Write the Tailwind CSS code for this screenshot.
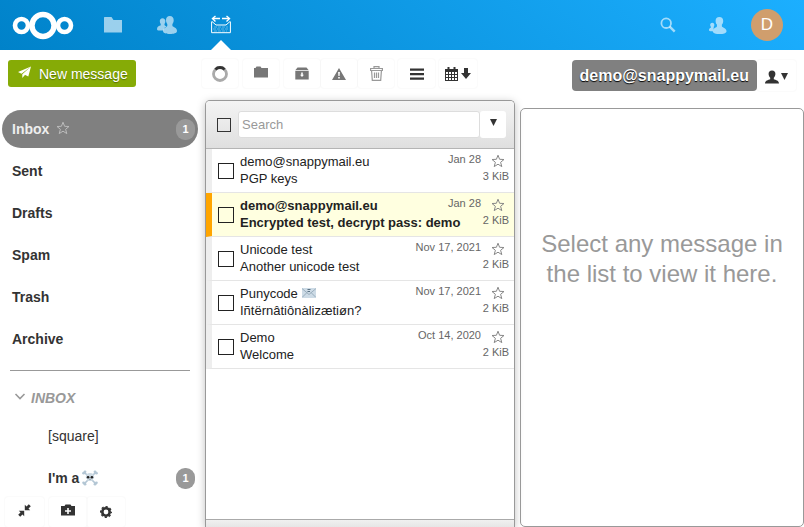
<!DOCTYPE html>
<html lang="en">
<head>
<meta charset="utf-8">
<meta name="viewport" content="width=device-width, initial-scale=1">
<title>SnappyMail</title>
<script src="https://cdn.jsdelivr.net/npm/@tailwindcss/browser@4"></script>
</head>
<body class="flex h-screen flex-col overflow-hidden bg-white font-['Liberation_Sans',Arial,sans-serif] text-[13px] text-[#222]">

<svg class="hidden" aria-hidden="true">
  <symbol id="star" viewBox="0 0 14 14"><path d="M7 1.2 8.6 5.3 13 5.5 9.6 8.3 10.8 12.6 7 10.2 3.2 12.6 4.4 8.3 1 5.5 5.4 5.3Z" fill="none" stroke="currentColor" stroke-width="1"/></symbol>
  <symbol id="people" viewBox="0 0 20 20"><path d="M5.5 3.2c1.9 0 2.9 1.3 2.9 3.1 0 1-.4 1.9-.9 2.6v1.2c0 .5 1.3.9 2 1.3-1.900.7-2.700 1.900-2.900 4.100H2.300C.8 15.500 0 15 0 14.200c0-2 1.300-3.200 3.200-3.700.4-.1.500-.3.500-.6V8.900c-.6-.7-.9-1.600-.9-2.600 0-1.800.9-3.100 2.700-3.100Z"/><path d="M12.800 1c2.600 0 3.900 1.700 3.900 4.200 0 1.500-.5 2.900-1.300 3.800v1.800c0 1.200 4.600 1.700 4.600 5.200 0 2.300-3.500 3-7 3s-7-.7-7-3c0-3.300 4.300-3.800 4.300-5.200V9C9.500 8.100 9 6.700 9 5.200 9 2.700 10.200 1 12.800 1Z"/></symbol>
</svg>

<header class="flex h-[50px] shrink-0 items-center bg-[linear-gradient(40deg,#0082c9_0%,#1cafff_100%)] pr-[21px] pl-3 text-white">
  <a href="#" aria-label="Home" class="mr-[23px]">
    <svg class="h-[30px] w-[62px]" viewBox="0 0 62 30" fill="none" stroke="#fff"><circle cx="31" cy="15.500" r="11" stroke-width="5.400"/><circle cx="9.500" cy="15.500" r="6.500" stroke-width="4.600"/><circle cx="52.500" cy="15.500" r="6.500" stroke-width="4.600"/></svg>
  </a>
  <nav class="flex h-full flex-1 items-center">
    <a href="#" aria-label="Files" class="flex w-8 justify-center text-white/60"><svg class="size-5" viewBox="0 0 20 20" fill="currentColor"><path d="M1.500 2h7l2 3H19v12.500H1V2.500Z"/></svg></a>
    <a href="#" aria-label="Contacts" class="ml-[22px] flex w-8 justify-center text-white/60"><svg class="size-5" fill="currentColor"><use href="#people"/></svg></a>
    <a href="#" aria-label="SnappyMail" class="relative ml-[22px] flex h-full w-8 items-center justify-center">
      <svg class="size-5" viewBox="0 0 20 20" fill="none" stroke="#fff"><path d="M.6 6.500v11.200h18.800V6.500M1 6.500 5 10h10l4-3.500" stroke-width="1"/><path d="M9 3.500H2M11 3.500H18" stroke-width="1.500"/><path d="M4.500 1 1.500 3.500l3 3M15.500 1l3 2.500-3 3" stroke-width="1.400"/><path d="M3 12h14M2 14h16M3 16h13" stroke-opacity=".35" stroke-dasharray="3 1"/></svg>
      <svg class="absolute bottom-0 left-[6px] h-[10px] w-5" viewBox="0 0 20 10" fill="#fff"><path d="M0 10 10 0 20 10Z"/></svg>
    </a>
  </nav>
  <button aria-label="Search" class="flex w-8 justify-center text-white/60"><svg class="size-4" viewBox="0 0 16 16" fill="none" stroke="currentColor"><circle cx="6.200" cy="6.200" r="4.800" stroke-width="1.800"/><path d="m9.700 9.700 5 5" stroke-width="2.400"/></svg></button>
  <button aria-label="Contacts menu" class="ml-[17px] flex w-8 justify-center text-white/60"><svg class="size-[19px]" viewBox="0 0 20 20" fill="currentColor"><path d="M4.500 7c1.500 0 2.200 1 2.200 2.400 0 .8-.3 1.500-.7 2v1.200L5 16H2.500c-1 0-1.500-.5-1.500-1.200 0-1.500 1-2.200 2-2.500v-.900c-.4-.5-.7-1.200-.7-2C2.300 8 3 7 4.500 7Z"/><path d="M12 1c2.600 0 4 1.700 4 4.200 0 1.500-.5 2.900-1.400 3.800v1.800c0 1.200 4.900 1.700 4.900 5.200 0 2.300-3.500 3-7.200 3s-7.300-.7-7.300-3c0-3.300 4.400-3.800 4.400-5.200V9C8.500 8.100 8 6.700 8 5.200 8 2.700 9.300 1 12 1Z"/></svg></button>
  <button aria-label="Account" class="ml-[18px] flex size-8 items-center justify-center rounded-full bg-[#d09e6d] text-[17px] text-white">D</button>
</header>

<main class="flex min-h-0 flex-1">
  <aside class="flex w-[205px] shrink-0 flex-col text-[14px] text-[#333]">
    <div class="h-[60px] shrink-0 pt-[10px] pl-2">
      <button class="flex h-[27px] items-center rounded-[3px] bg-[#86ab06] px-2 pt-px text-white [text-shadow:0_1px_1px_rgba(0,0,0,.35)]">
        <svg class="mr-[7px] mb-1 h-[13px] w-4" viewBox="0 0 16 13" fill="#fff"><path d="M15 .5 2 6l3.500 1.800ZM15 .5 6.300 8.200V12l2.200-2.400ZM15 .5 8.300 8.400l4 2.200Z"/></svg>
        New message
      </button>
    </div>
    <nav class="min-h-0 flex-1 overflow-hidden pl-[2px]">
      <ul class="flex flex-col gap-1 font-bold">
        <li><a href="#" class="mr-[7px] flex h-[38px] items-center rounded-full bg-[#808080] pr-[3px] pl-[10px] text-[#eee]">Inbox<svg class="mb-[3px] ml-[7px] size-[14px] text-[#bbb]"><use href="#star"/></svg><span class="ml-auto flex h-[21px] w-[19px] items-center justify-center rounded-[9px] bg-[#999] text-[11px] text-white">1</span></a></li>
        <li><a href="#" class="flex h-[38px] items-center pl-[10px]">Sent</a></li>
        <li><a href="#" class="flex h-[38px] items-center pl-[10px]">Drafts</a></li>
        <li><a href="#" class="flex h-[38px] items-center pl-[10px]">Spam</a></li>
        <li><a href="#" class="flex h-[38px] items-center pl-[10px]">Trash</a></li>
        <li><a href="#" class="flex h-[38px] items-center pl-[10px]">Archive</a></li>
      </ul>
      <hr class="mt-3 mr-[15px] mb-2 ml-2 border-[#999]">
      <ul>
        <li>
          <button class="flex h-[38px] items-center pl-3 font-bold text-[#999] italic"><svg class="mr-[5px] mb-1 h-[7px] w-3" viewBox="0 0 12 7" fill="none" stroke="currentColor" stroke-width="1.600"><path d="m1.500 1 4.500 4.500L10.500 1"/></svg>INBOX</button>
          <ul class="flex flex-col gap-1">
            <li><a href="#" class="flex h-[38px] items-center pl-[46px]">[square]</a></li>
            <li><a href="#" class="mr-[7px] flex h-[38px] items-center pr-[3px] pl-[46px] font-bold">I'm a
              <svg role="img" aria-label="skull and crossbones" class="ml-[3px] size-4" viewBox="0 0 16 16"><g stroke="#b3c6d4" stroke-width="1.700" stroke-linecap="round"><path d="M2.500 2.500 13.500 13.500M13.500 2.500 2.500 13.500"/></g><g fill="#b3c6d4"><circle cx="3" cy="1.800" r="1.400"/><circle cx="1.600" cy="3.200" r="1.400"/><circle cx="13" cy="1.800" r="1.400"/><circle cx="14.400" cy="3.200" r="1.400"/><circle cx="3" cy="14.200" r="1.400"/><circle cx="1.600" cy="12.800" r="1.400"/><circle cx="13" cy="14.200" r="1.400"/><circle cx="14.400" cy="12.800" r="1.400"/></g><path d="M8 3c2.700 0 4.200 1.600 4.200 3.700 0 1.400-.6 2.300-1.600 2.800v1.500H5.400V9.500c-1-.5-1.600-1.400-1.600-2.800C3.800 4.600 5.300 3 8 3Z" fill="#ccd9e2"/><circle cx="6.100" cy="7.200" r="1.300" fill="#222"/><circle cx="9.900" cy="7.200" r="1.300" fill="#222"/><path d="m8 8.500.7 1.100H7.300Z" fill="#444"/></svg>
              <span class="ml-auto flex h-[21px] w-[19px] items-center justify-center rounded-[9px] bg-[#999] text-[11px] text-white">1</span></a></li>
          </ul>
        </li>
      </ul>
    </nav>
    <footer class="flex h-[30px] shrink-0 items-center pl-[5px] text-[#333]">
      <button aria-label="Collapse" class="flex h-full w-[39px] items-center justify-center rounded-[3px] shadow-[0_0_2px_rgba(0,0,0,.07)]"><svg class="mb-1 size-[13px]" viewBox="0 0 13 13" fill="currentColor"><path d="M6.800 6.200V.8l1.700 1.700L10.800.2 12.800 2.200 10.500 4.500l1.700 1.700ZM6.200 6.800v5.400l-1.700-1.700L2.200 12.800.2 10.800 2.500 8.500.8 6.800Z"/></svg></button>
      <button aria-label="New folder" class="ml-[5px] flex h-full w-[38px] items-center justify-center rounded-[3px] shadow-[0_0_2px_rgba(0,0,0,.07)]"><svg class="mb-1 h-3 w-[14px]" viewBox="0 0 14 12" fill="currentColor"><path fill-rule="evenodd" d="M0 2h3.500L4.500.5h5l1 1.500H14v9.500H0ZM6.200 4v2.200H4v1.600h2.200V10h1.600V7.800H10V6.200H7.800V4Z"/></svg></button>
      <button aria-label="Settings" class="flex h-full w-[38px] items-center justify-center rounded-[3px] shadow-[0_0_2px_rgba(0,0,0,.07)]"><svg class="size-3" viewBox="0 0 12 12" fill="none" stroke="currentColor"><circle cx="6" cy="6" r="3.700" stroke-width="2.600"/><circle cx="6" cy="6" r="5.300" stroke-width="1.400" stroke-dasharray="2.200 1.960" stroke-dashoffset="1.100"/></svg></button>
    </footer>
  </aside>

  <section class="flex w-[310px] shrink-0 flex-col">
    <div class="flex h-[50px] shrink-0 items-start pt-[9px] text-[#333]">
      <button aria-label="Reload" class="-ml-[3px] flex h-[29px] w-[36px] items-center justify-center rounded-[3px] shadow-[0_0_2px_rgba(0,0,0,.07)]"><svg class="size-4" viewBox="0 0 16 16" fill="none" stroke-width="2.800"><circle cx="8" cy="8" r="6.500" stroke="#aaa"/><path d="M3.400 3.400A6.500 6.500 0 0 1 12.600 3.400" stroke="#333"/></svg></button>
      <button aria-label="Move to folder" class="ml-[5px] flex h-[29px] w-[36px] items-center justify-center rounded-[3px] text-[#777] shadow-[0_0_2px_rgba(0,0,0,.07)]"><svg class="mb-[3px] h-3 w-[14px]" viewBox="0 0 14 12" fill="currentColor"><path d="M0 2h1.500L2.500.5h4L7.500 2H14v9.500H0Z"/></svg></button>
      <button aria-label="Archive" class="ml-[5px] flex h-[29px] w-[36px] items-center justify-center rounded-[3px] text-[#777] shadow-[0_0_2px_rgba(0,0,0,.07)]"><svg class="h-[13px] w-[14px]" viewBox="0 0 14 13" fill="currentColor"><path d="M2.500.5h9L13.500 3H.5Z"/><path fill-rule="evenodd" d="M.3 3.800h13.400v8.700H.3ZM6.200 5.500v2.200H5L7 10l2-2.300H7.800V5.500Z"/></svg></button>
      <button aria-label="Spam" class="ml-px flex h-[29px] w-[36px] items-center justify-center rounded-[3px] text-[#777] shadow-[0_0_2px_rgba(0,0,0,.07)]"><svg class="h-3 w-[14px]" viewBox="0 0 14 12" fill="currentColor"><path fill-rule="evenodd" d="M7 0 14 12H0ZM6.100 4l.3 4h1.200l.3-4Zm.1 5v1.500h1.600V9Z"/></svg></button>
      <button aria-label="Delete" class="ml-px flex h-[29px] w-[36px] items-center justify-center rounded-[3px] text-[#999] shadow-[0_0_2px_rgba(0,0,0,.07)]"><svg class="h-[15px] w-[13px]" viewBox="0 0 13 15" fill="none" stroke="currentColor"><path d="M4 2.500V.7h5v1.800M.6 4.500v-2h11.800v2ZM1.600 4.800 2.300 14.300h8.400l.7-9.500" stroke-width="1.200"/><path d="M4.500 6.500V12M6.500 6.500V12M8.500 6.500V12" stroke-width="1.200"/></svg></button>
      <button aria-label="Menu" class="ml-1 flex h-[29px] w-[37px] items-center justify-center rounded-[3px] shadow-[0_0_2px_rgba(0,0,0,.07)]"><svg class="h-3 w-[14px]" viewBox="0 0 14 12" fill="currentColor"><path d="M0 .5h14v2.300H0ZM0 5h14v2.300H0ZM0 9.500h14v2.300H0Z"/></svg></button>
      <button aria-label="Sort by date" class="ml-1 flex h-[29px] w-[38px] items-center justify-center gap-[3px] rounded-[3px] shadow-[0_0_2px_rgba(0,0,0,.07)]"><svg class="h-[14px] w-[13px]" viewBox="0 0 13 14" fill="currentColor"><path fill-rule="evenodd" d="M0 2h13v12H0ZM1 5v2h2V5Zm3 0v2h2V5Zm3 0v2h2V5Zm3 0v2h2V5ZM1 8v2h2V8Zm3 0v2h2V8Zm3 0v2h2V8Zm3 0v2h2V8ZM1 11v2h2v-2Zm3 0v2h2v-2Zm3 0v2h2v-2Zm3 0v2h2v-2Z"/><path d="M2.500 0h2v3h-2ZM8.500 0h2v3h-2Z"/></svg><svg class="h-[11px] w-[10px]" viewBox="0 0 10 11" fill="currentColor"><path d="M3 0h4v5h3L5 11 0 5h3Z"/></svg></button>
    </div>

    <div class="flex min-h-0 flex-1 flex-col overflow-hidden rounded-t-[5px] border border-b-0 border-[#999] bg-white shadow-[0_2px_8px_rgba(0,0,0,.25)]">
      <div class="flex h-[48px] shrink-0 items-center border-b border-[#b4b4b4] bg-linear-to-b from-[#f4f4f4] to-[#dfdfdf] pr-2 pl-[11px]">
        <input type="checkbox" aria-label="Select all" class="size-[14px] appearance-none border border-[#333]">
        <input type="search" aria-label="Search" placeholder="Search" class="ml-[7px] h-[27px] min-w-0 flex-1 rounded-[3px] border border-[#ddd] bg-white px-[3px] placeholder:text-[#999]">
        <button aria-label="Search options" class="flex h-[27px] w-[26px] items-center justify-center rounded-[3px] bg-white"><svg class="mb-1 size-[7px]" viewBox="0 0 7 7" fill="#333"><path d="M0 0h7L3.500 7Z"/></svg></button>
      </div>

      <ul class="min-h-0 flex-1 overflow-hidden leading-[17px]">
        <li class="flex h-[44px] border-b border-l-6 border-b-[#e5e5e5] border-l-[#eee] pt-1 pr-[5px] pl-[6px]">
          <input type="checkbox" aria-label="Select PGP keys" class="mt-[10px] size-4 shrink-0 appearance-none border border-[#222]">
          <a href="#" class="ml-[6px] min-w-0 flex-1"><div>demo@snappymail.eu</div><div>PGP keys</div></a>
          <div class="text-[11px] text-[#666]"><div class="flex h-[15px] justify-end gap-[10px]"><time class="leading-[13px]">Jan 28</time><button aria-label="Flag" class="mr-1 text-[#888]"><svg class="size-[14px]"><use href="#star"/></svg></button></div><div class="text-right">3 KiB</div></div>
        </li>
        <li class="flex h-[44px] border-b border-l-6 border-b-[#e5e5e5] border-l-[#ffa500] bg-[#ffffe0] pt-1 pr-[5px] pl-[6px]">
          <input type="checkbox" aria-label="Select Encrypted test" class="mt-[10px] size-4 shrink-0 appearance-none border border-[#222]">
          <a href="#" class="ml-[6px] min-w-0 flex-1 font-bold whitespace-nowrap"><div>demo@snappymail.eu</div><div>Encrypted test, decrypt pass: demo</div></a>
          <div class="text-[11px] text-[#666]"><div class="flex h-[15px] justify-end gap-[10px]"><time class="leading-[13px]">Jan 28</time><button aria-label="Flag" class="mr-1 text-[#888]"><svg class="size-[14px]"><use href="#star"/></svg></button></div><div class="text-right">2 KiB</div></div>
        </li>
        <li class="flex h-[44px] border-b border-l-6 border-b-[#e5e5e5] border-l-[#eee] pt-1 pr-[5px] pl-[6px]">
          <input type="checkbox" aria-label="Select Another unicode test" class="mt-[10px] size-4 shrink-0 appearance-none border border-[#222]">
          <a href="#" class="ml-[6px] min-w-0 flex-1"><div>Unicode test</div><div>Another unicode test</div></a>
          <div class="text-[11px] text-[#666]"><div class="flex h-[15px] justify-end gap-[10px]"><time class="leading-[13px]">Nov 17, 2021</time><button aria-label="Flag" class="mr-1 text-[#888]"><svg class="size-[14px]"><use href="#star"/></svg></button></div><div class="text-right">2 KiB</div></div>
        </li>
        <li class="flex h-[44px] border-b border-l-6 border-b-[#e5e5e5] border-l-[#eee] pt-1 pr-[5px] pl-[6px]">
          <input type="checkbox" aria-label="Select Iñtërnâtiônàlizætiøn?" class="mt-[10px] size-4 shrink-0 appearance-none border border-[#222]">
          <a href="#" class="ml-[6px] min-w-0 flex-1"><div class="flex items-center gap-1">Punycode <svg role="img" aria-label="e-mail" class="mb-px h-[10px] w-[14px]" viewBox="0 0 14 10"><rect width="14" height="10" rx="1" fill="#cddbe6"/><path d="m0 9.500 5-5M14 9.500l-5-5M0 .5l7 6 7-6" fill="none" stroke="#94a9b9" stroke-width=".9"/><path d="M5.500 1.500h3M5.500 3.500h2.500" stroke="#4d6476" stroke-width=".9"/></svg></div><div>Iñtërnâtiônàlizætiøn?</div></a>
          <div class="text-[11px] text-[#666]"><div class="flex h-[15px] justify-end gap-[10px]"><time class="leading-[13px]">Nov 17, 2021</time><button aria-label="Flag" class="mr-1 text-[#888]"><svg class="size-[14px]"><use href="#star"/></svg></button></div><div class="text-right">2 KiB</div></div>
        </li>
        <li class="flex h-[44px] border-b border-l-6 border-b-[#e5e5e5] border-l-[#eee] pt-1 pr-[5px] pl-[6px]">
          <input type="checkbox" aria-label="Select Welcome" class="mt-[10px] size-4 shrink-0 appearance-none border border-[#222]">
          <a href="#" class="ml-[6px] min-w-0 flex-1"><div>Demo</div><div>Welcome</div></a>
          <div class="text-[11px] text-[#666]"><div class="flex h-[15px] justify-end gap-[10px]"><time class="leading-[13px]">Oct 14, 2020</time><button aria-label="Flag" class="mr-1 text-[#888]"><svg class="size-[14px]"><use href="#star"/></svg></button></div><div class="text-right">2 KiB</div></div>
        </li>
      </ul>
      <div class="h-2 shrink-0 border-t border-[#aaa] bg-linear-to-b from-[#f0f0f0] to-[#e6e6e6]"></div>
    </div>
  </section>

  <section class="ml-[5px] flex min-w-0 flex-1 flex-col">
    <div class="flex h-[58px] shrink-0 items-start justify-end pt-[10px] pr-2">
      <div class="flex h-[31px] items-center rounded-[4px] bg-[#808080] px-2 pt-px text-[16px] font-bold text-white [text-shadow:0_1px_1px_#000]">demo@snappymail.eu</div>
      <button aria-label="Account menu" class="flex h-[31px] w-[39px] items-center justify-center gap-[2px] rounded-[3px] pt-[2px] text-[#333] shadow-[0_0_2px_rgba(0,0,0,.07)]"><svg class="size-[14px]" viewBox="0 0 14 14" fill="currentColor"><path d="M7 .5c2.300 0 3.400 1.400 3.400 3.300 0 1.600-.7 3-1.600 3.900v1.500c2 .7 5.200 1.300 5.200 4.300H0c0-3 3.200-3.600 5.200-4.300V7.700C4.300 6.800 3.600 5.400 3.600 3.800 3.600 1.900 4.700.5 7 .5Z"/></svg><svg class="size-[7px]" viewBox="0 0 7 7" fill="currentColor"><path d="M0 0h7L3.500 7Z"/></svg></button>
    </div>
    <div class="min-h-0 flex-1 rounded-[5px] border border-[#999] px-5 pt-[120px] text-center text-[24px] leading-[30px] text-[#999]">Select any message in the list to view it here.</div>
  </section>
</main>
</body>
</html>
